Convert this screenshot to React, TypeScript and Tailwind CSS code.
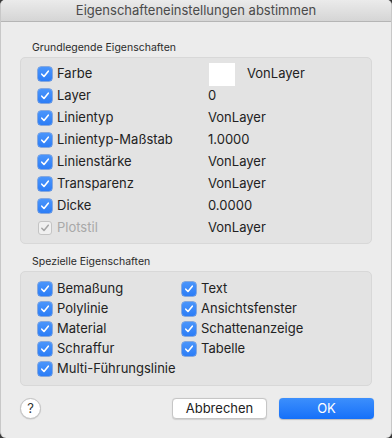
import type { ReactNode } from "react";

const basic = [
  { label: "Farbe", value: "VonLayer", swatch: true },
  { label: "Layer", value: "0" },
  { label: "Linientyp", value: "VonLayer" },
  { label: "Linientyp-Maßstab", value: "1.0000" },
  { label: "Linienstärke", value: "VonLayer" },
  { label: "Transparenz", value: "VonLayer" },
  { label: "Dicke", value: "0.0000" },
  { label: "Plotstil", value: "VonLayer", disabled: true },
];

const specialLeft = ["Bemaßung", "Polylinie", "Material", "Schraffur", "Multi-Führungslinie"];
const specialRight = ["Text", "Ansichtsfenster", "Schattenanzeige", "Tabelle"];

function Check({ disabled }: { disabled?: boolean }) {
  if (disabled) {
    return (
      <span className="w-[14px] h-[14px] rounded-[3px] border border-[#c4c4c4] bg-[#f0f0f0] flex items-center justify-center shrink-0">
        <svg width="10" height="10" viewBox="0 0 10 10">
          <path d="M1.8 5.2 L4 7.5 L8.3 2.2" fill="none" stroke="#a5a5a5" strokeWidth="1.5" strokeLinecap="round" strokeLinejoin="round" />
        </svg>
      </span>
    );
  }
  return (
    <span className="w-[14px] h-[14px] rounded-[3px] bg-gradient-to-b from-[#4a95fb] to-[#2c7df6] flex items-center justify-center shrink-0 shadow-[0_0_0_0.5px_#2a6fd8]">
      <svg width="10" height="10" viewBox="0 0 10 10">
        <path d="M1.8 5.2 L4 7.5 L8.3 2.2" fill="none" stroke="white" strokeWidth="1.6" strokeLinecap="round" strokeLinejoin="round" />
      </svg>
    </span>
  );
}

function CheckLabel({ children, disabled }: { children: ReactNode; disabled?: boolean }) {
  return (
    <div className="flex items-center gap-[5px]">
      <Check disabled={disabled} />
      <span className={disabled ? "text-[#a8a8a8]" : "text-[#222]"}>{children}</span>
    </div>
  );
}

export default function App() {
  return (
    <div className="w-[392px] h-[438px] bg-[#3a3a3a]" style={{ fontFamily: "Inter, 'Liberation Sans', sans-serif" }}>
      <div className="h-full flex flex-col bg-[#ececec] rounded-t-[5px] rounded-b-[6px] border-x border-[#c8c8c8] overflow-hidden">
        {/* Title bar */}
        <div className="h-[22px] shrink-0 bg-gradient-to-b from-[#ebebeb] to-[#d5d5d5] border-b border-[#b5b5b5] flex items-center justify-center">
          <span className="text-[13px] text-[#4a4a4a]">Eigenschafteneinstellungen abstimmen</span>
        </div>

        <div className="flex-1 flex flex-col px-[19px]">
          {/* Basic properties */}
          <div className="mt-[18px] pl-[12px] h-[15px] text-[10.5px] text-[#2a2a2a] leading-[15px]">Grundlegende Eigenschaften</div>
          <div className="mt-[2px] rounded-[5px] bg-[#e3e3e3] border border-[#d8d8d8] pl-[17px] pt-[5px] pb-[4px] text-[13px]">
            {basic.map((r) => (
              <div key={r.label} className="h-[22px] flex items-center">
                <div className="w-[170px]">
                  <CheckLabel disabled={r.disabled}>{r.label}</CheckLabel>
                </div>
                {r.swatch ? (
                  <div className="flex items-center">
                    <span className="w-[26px] h-[23px] bg-white ml-[1px] mr-[12px]" />
                    <span className="text-[#222]">{r.value}</span>
                  </div>
                ) : (
                  <span className="text-[#222]">{r.value}</span>
                )}
              </div>
            ))}
          </div>

          {/* Special properties */}
          <div className="mt-[10px] pl-[12px] h-[15px] text-[10.5px] text-[#2a2a2a] leading-[15px]">Spezielle Eigenschaften</div>
          <div className="mt-[2px] rounded-[5px] bg-[#e3e3e3] border border-[#d8d8d8] pl-[17px] pt-[7px] pb-[6px] text-[13px] flex">
            <div className="w-[144px] flex flex-col">
              {specialLeft.map((s) => (
                <div key={s} className="h-[20px] flex items-center">
                  <CheckLabel>{s}</CheckLabel>
                </div>
              ))}
            </div>
            <div className="flex flex-col">
              {specialRight.map((s) => (
                <div key={s} className="h-[20px] flex items-center">
                  <CheckLabel>{s}</CheckLabel>
                </div>
              ))}
            </div>
          </div>

          {/* Buttons */}
          <div className="mt-[12px] flex items-center">
            <button className="w-[21px] h-[21px] rounded-full bg-white border border-[#c2c2c2] shadow-[0_0.5px_1px_rgba(0,0,0,0.15)] flex items-center justify-center text-[13px] text-[#333]">
              ?
            </button>
            <div className="flex-1" />
            <button className="w-[95px] h-[21px] rounded-[4px] bg-white border border-[#c6c6c6] shadow-[0_0.5px_1px_rgba(0,0,0,0.12)] text-[13px] text-[#222] flex items-center justify-center">
              Abbrechen
            </button>
            <button className="ml-[12px] mr-[-2px] w-[95px] h-[21px] rounded-[4px] bg-gradient-to-b from-[#3c8ffc] to-[#1470f9] text-[13px] text-white flex items-center justify-center shadow-[0_0.5px_1px_rgba(0,0,0,0.2)]">
              OK
            </button>
          </div>
        </div>
      </div>
    </div>
  );
}
